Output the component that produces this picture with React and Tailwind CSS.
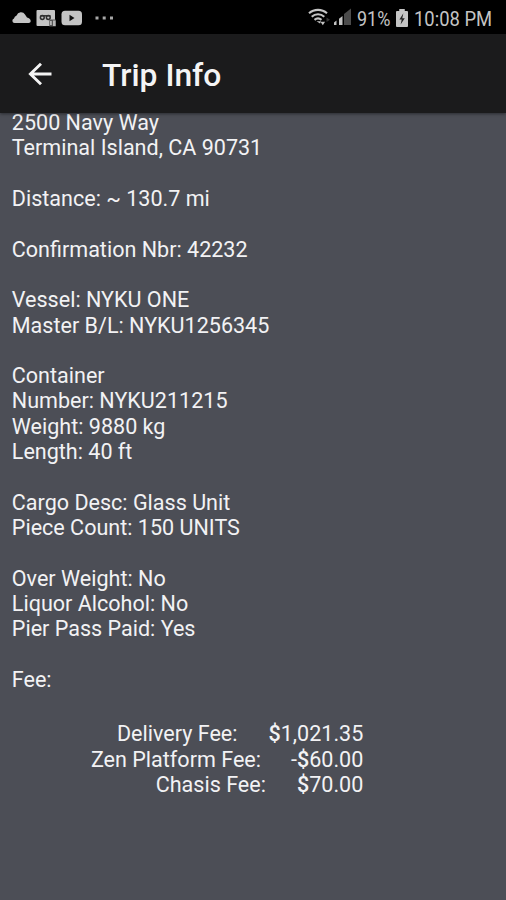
const SECTIONS = [
  ["2500 Navy Way", "Terminal Island, CA 90731"],
  ["Distance: ~ 130.7 mi"],
  ["Confirmation Nbr: 42232"],
  ["Vessel: NYKU ONE", "Master B/L: NYKU1256345"],
  ["Container", "Number: NYKU211215", "Weight: 9880 kg", "Length: 40 ft"],
  ["Cargo Desc: Glass Unit", "Piece Count: 150 UNITS"],
  ["Over Weight: No", "Liquor Alcohol: No", "Pier Pass Paid: Yes"],
  ["Fee:"],
];

const FEES = [
  { label: "Delivery Fee:", amount: "1,021.35", gap: "gap-[31px]" },
  { label: "Zen Platform Fee:", sign: "-", amount: "60.00", gap: "gap-[30px]" },
  { label: "Chasis Fee:", amount: "70.00", gap: "gap-[31px]" },
];

function StatusBar() {
  return (
    <div className="flex h-[34px] items-center justify-between bg-black pl-3 pr-[14px] text-[#c4c4c4]">
      <div className="flex items-center pt-px">
        <svg width="19" height="13" viewBox="0 0 19 13" fill="currentColor">
          <path d="M2.5 12A2.3 2.3 0 0 1 2 7.5 4 4 0 0 1 4.6 4.4 4.6 4.6 0 0 1 13 3.6l2 2.9c2 .5 3.7 1.9 3.7 3.5 0 1.2-.8 2-2 2z" />
        </svg>
        <svg className="ml-[5px]" width="21" height="18" viewBox="0 0 21 18">
          <rect x="0.5" y="1" width="18.5" height="16" rx="1" fill="#c4c4c4" />
          <g fill="none" stroke="#303030" strokeWidth="1.5">
            <circle cx="6.3" cy="8.5" r="1.9" />
            <circle cx="12.3" cy="8.5" r="1.9" />
            <path d="M4.5 6.8h10" />
          </g>
          <path d="M13.3 10.5h6.5v7h-6.5z" fill="#555" />
          <path d="M14 12h1.8v4H14zM17 11.5h2.6v5.5H17z" fill="#b5b5b5" />
        </svg>
        <svg className="ml-1" width="22" height="16" viewBox="0 0 22 16">
          <rect x="0.5" y="0.7" width="20.5" height="14.5" rx="3.5" fill="#c4c4c4" />
          <path d="M8.5 4.8v6.4l5-3.2z" fill="#111" />
        </svg>
        <svg className="ml-3" width="19" height="4" viewBox="0 0 19 4" fill="#a8a8a8">
          <rect x="0.5" y="0.5" width="3" height="3" />
          <rect x="7.7" y="0.5" width="3" height="3" />
          <rect x="15" y="0.5" width="3" height="3" />
        </svg>
      </div>
      <div className="flex items-center">
        <svg width="24" height="20" viewBox="0 0 24 20" fill="none" stroke="currentColor">
          <path d="M1 6.3a13.5 13.5 0 0 1 18 0" strokeWidth="2.1" />
          <path d="M3.7 9.7a9.5 9.5 0 0 1 12.6 0" strokeWidth="2.1" />
          <path d="M6.5 12.9a5.4 5.4 0 0 1 7 0" strokeWidth="2.1" />
          <path d="M8.5 14.2H13l-1 2.4z" fill="currentColor" stroke="none" />
          <path d="M12.5 14.8h4.6l-2.3 3.4z" fill="currentColor" stroke="none" />
          <path d="M18.5 10.5V15l3.500-2.2z" fill="#333" stroke="none" />
        </svg>
        <svg className="ml-[2px]" width="18" height="18" viewBox="0 0 18 18">
          <path d="M0 17v-2.6l2.500-1.900V17z" fill="#c4c4c4" />
          <path d="M5 17v-6.3L8.5 8v9z" fill="#c4c4c4" />
          <path d="M10 17V6L17 .4V17z" fill="#4b4b4b" />
        </svg>
        <span className="ml-[5px] mt-[3px] w-[34px] origin-left scale-x-[0.9] whitespace-nowrap text-[20px] leading-none">
          91%
        </span>
        <svg className="ml-[5px] mt-px" width="12" height="18" viewBox="0 0 13 18" preserveAspectRatio="none">
          <path d="M3.5 0h6v2H12a1 1 0 0 1 1 1v14a1 1 0 0 1-1 1H1a1 1 0 0 1-1-1V3a1 1 0 0 1 1-1h2.5z" fill="#c4c4c4" />
          <path d="M8 4.2 3.7 10.6h2.5L5 15.4l4.500-6.200H6.800z" fill="#222" />
        </svg>
        <span className="ml-[6px] mt-[3px] w-[78px] origin-left scale-x-[0.92] whitespace-nowrap text-[20px] leading-none">
          10:08 PM
        </span>
      </div>
    </div>
  );
}

function Header() {
  return (
    <header className="z-10 flex h-[79px] items-center bg-[#1b1b1c] pl-7 pt-[4px] text-[#f4f4f4] shadow-[0_1px_3px_rgba(0,0,0,0.45)]">
      <svg
        className="-mt-[4px]"
        width="24"
        height="24"
        viewBox="0 0 24 24"
        fill="none"
        stroke="currentColor"
        strokeWidth="2.9"
      >
        <path d="M23.5 12h-21M13 1.7 2.400 12 13 22.300" />
      </svg>
      <h1 className="ml-[50px] text-[31.8px] font-medium leading-none">Trip Info</h1>
    </header>
  );
}

export default function App() {
  return (
    <div className="flex h-[900px] w-[506px] flex-col overflow-hidden bg-[#4c4e56] font-['Roboto',sans-serif]">
      <StatusBar />
      <Header />
      <main className="-mt-[3px] whitespace-nowrap pl-[11.8px] text-[21.55px] leading-[25.32px] text-[#f2f2f4]">
        <div className="flex flex-col gap-[25.32px]">
          {SECTIONS.map((lines) => (
            <div key={lines[0]}>
              {lines.map((line) => (
                <p key={line}>{line}</p>
              ))}
            </div>
          ))}
        </div>
        <div className="mt-[29px] w-[351.5px]">
          {FEES.map((fee) => (
            <div key={fee.label} className={`flex justify-end ${fee.gap}`}>
              <span>{fee.label}</span>
              <span>
                {fee.sign}
                <span className="font-medium">$</span>
                {fee.amount}
              </span>
            </div>
          ))}
        </div>
      </main>
    </div>
  );
}
